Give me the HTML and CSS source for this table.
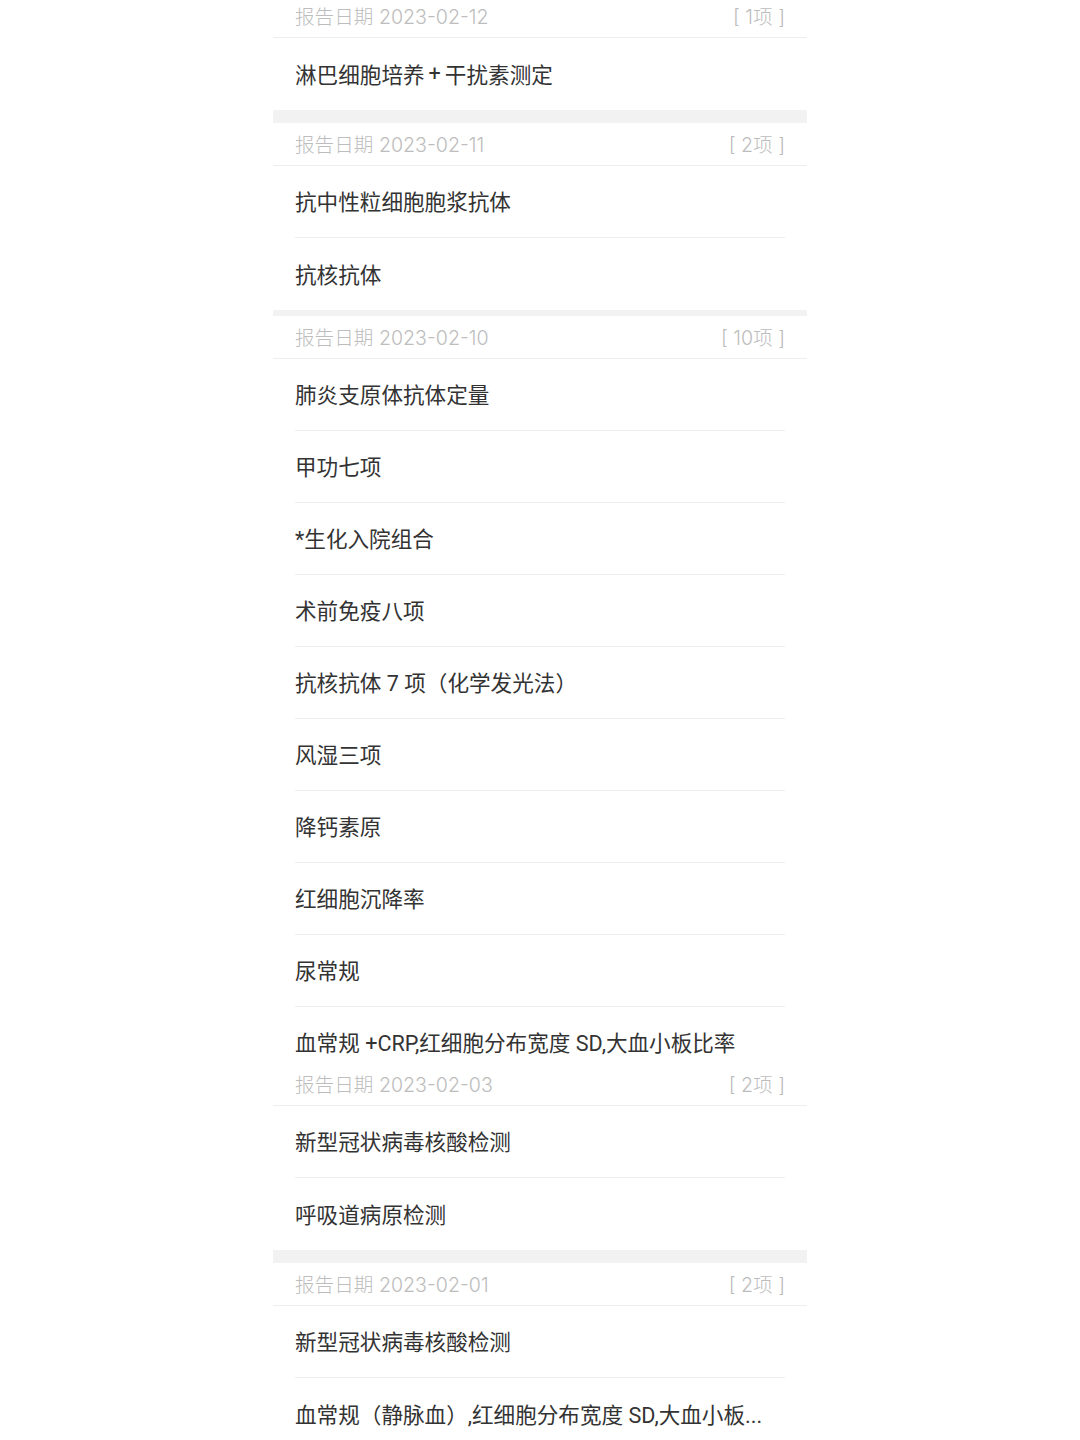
FILE: index.html
```html
<!DOCTYPE html>
<html lang="zh-CN">
<head>
<meta charset="UTF-8" />
<meta name="viewport" content="width=device-width, initial-scale=1" />
<title>检验报告</title>
<link rel="stylesheet" href="styles.css">
</head>
<body>
  <div class="report-list">

    <section class="group first">
      <div class="group-head">
        <span class="date">报告日期 2023-02-12</span>
        <span class="count">[ 1项 ]</span>
      </div>
      <div class="item">淋巴细胞培养<span class="plus">+</span>干扰素测定</div>
    </section>

    <div class="gap"></div>

    <section class="group">
      <div class="group-head">
        <span class="date">报告日期 2023-02-11</span>
        <span class="count">[ 2项 ]</span>
      </div>
      <div class="item">抗中性粒细胞胞浆抗体</div>
      <div class="item">抗核抗体</div>
    </section>

    <div class="gap thin"></div>

    <section class="group">
      <div class="group-head">
        <span class="date">报告日期 2023-02-10</span>
        <span class="count">[ 10项 ]</span>
      </div>
      <div class="item">肺炎支原体抗体定量</div>
      <div class="item">甲功七项</div>
      <div class="item">*生化入院组合</div>
      <div class="item">术前免疫八项</div>
      <div class="item">抗核抗体 7 项（化学发光法）</div>
      <div class="item">风湿三项</div>
      <div class="item">降钙素原</div>
      <div class="item">红细胞沉降率</div>
      <div class="item">尿常规</div>
      <div class="item cut">血常规 +CRP,红细胞分布宽度 SD,大血小板比率</div>
    </section>

    <section class="group">
      <div class="group-head">
        <span class="date">报告日期 2023-02-03</span>
        <span class="count">[ 2项 ]</span>
      </div>
      <div class="item">新型冠状病毒核酸检测</div>
      <div class="item">呼吸道病原检测</div>
    </section>

    <div class="gap"></div>

    <section class="group">
      <div class="group-head">
        <span class="date">报告日期 2023-02-01</span>
        <span class="count">[ 2项 ]</span>
      </div>
      <div class="item">新型冠状病毒核酸检测</div>
      <div class="item">血常规（静脉血）,红细胞分布宽度 SD,大血小板...</div>
    </section>

  </div>
</body>
</html>
```

FILE: styles.css
```css
body {
  margin: 0;
  background: #fff;
  font-family: "Roboto", "Noto Sans CJK SC", sans-serif;
}

.report-list {
  width: 534px;
  margin: -5px auto 0;
  overflow: hidden;
}

/* cabeçalho do grupo: data + quantidade */
.group-head {
  display: flex;
  justify-content: space-between;
  align-items: center;
  height: 43px;
  box-sizing: border-box;
  padding: 0 22px 2px;
  border-bottom: 1px solid #eeeeee;
  color: #bdbdbd;
  font-family: "Inter", "Noto Sans CJK SC", sans-serif;
  font-size: 19.6px;
  font-weight: 300;
}

.item {
  display: flex;
  align-items: center;
  height: 72px;
  box-sizing: border-box;
  margin: 0 22px;
  padding-bottom: 2px;
  border-bottom: 1px solid #eeeeee;
  color: #333;
  font-size: 21.6px;
  white-space: nowrap;
  overflow: hidden;
}

.item:last-child {
  border-bottom: none;
}

.plus {
  margin: 0 4px;
}

/* linha cortada na emenda da captura */
.item.cut {
  height: 56px;
  align-items: flex-start;
  padding: 19px 0 0;
}

.gap {
  height: 13px;
  background: #f2f2f2;
}

.gap.thin {
  height: 6px;
}
```
